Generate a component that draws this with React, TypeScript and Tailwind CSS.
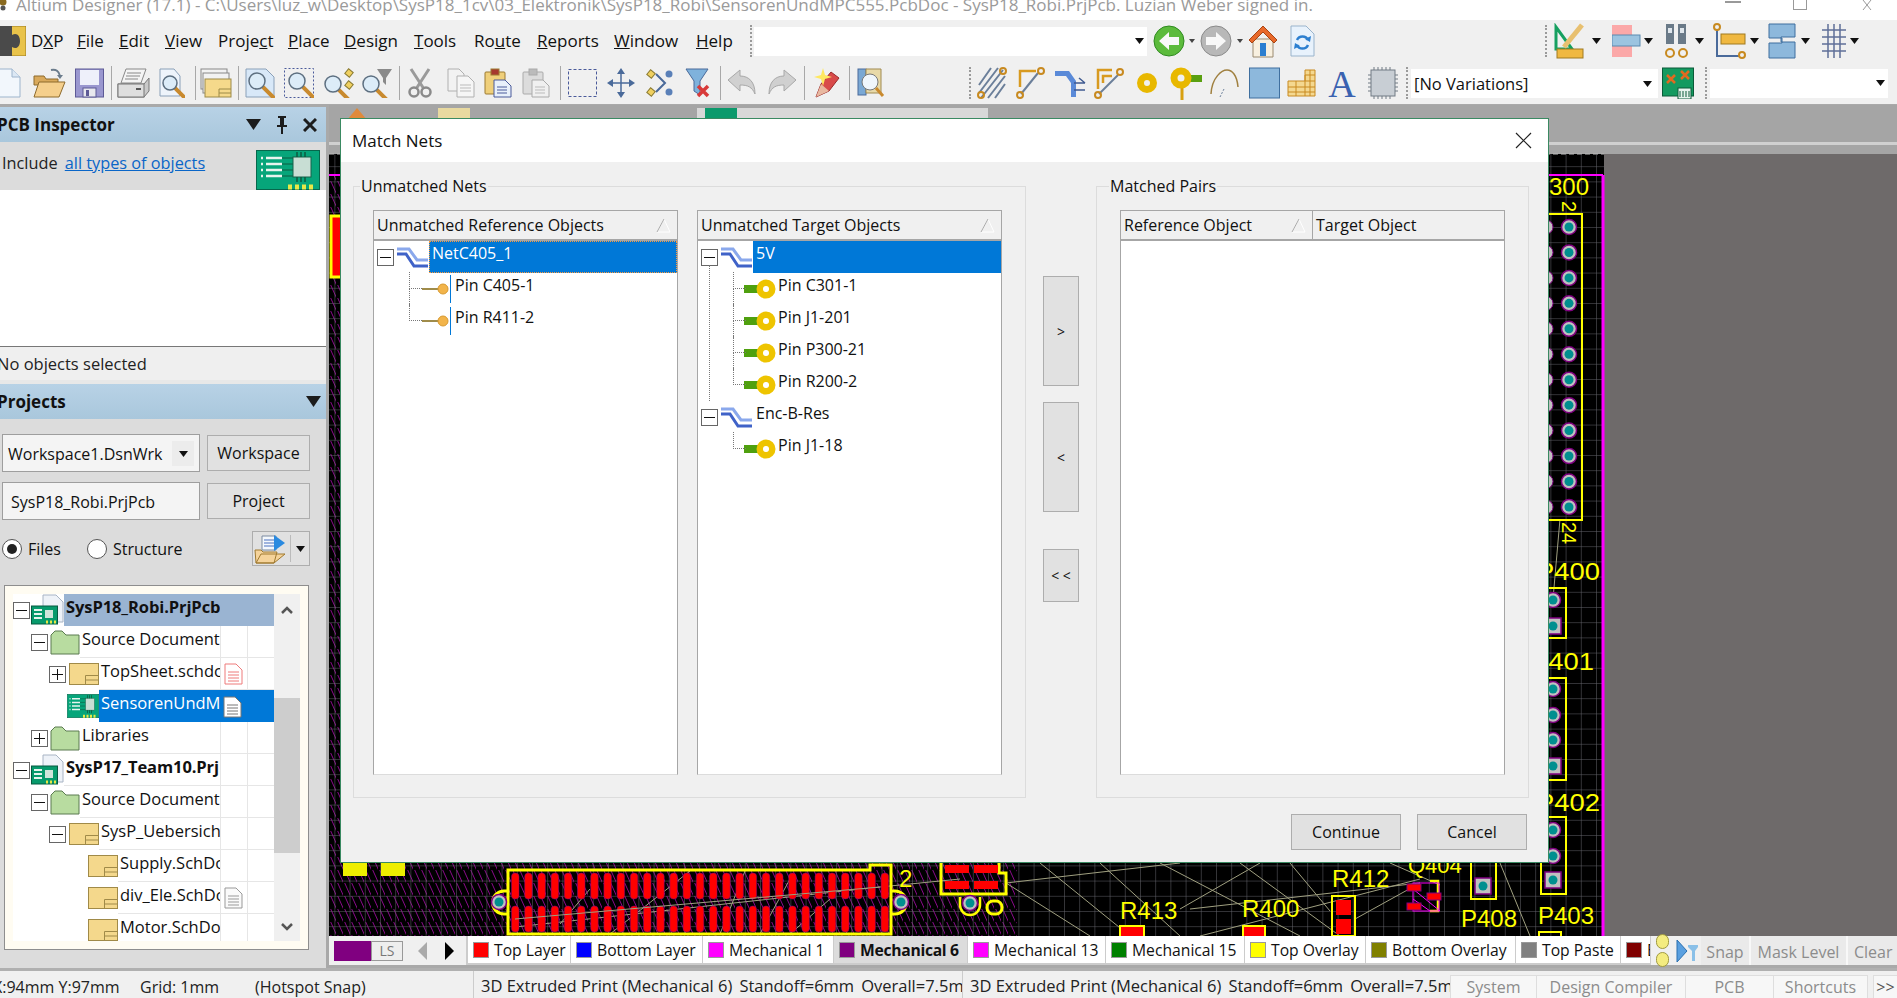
import type { ReactNode } from "react";

type IconProps = { className?: string };

function Ico({ w, h, className, children }: { w: number; h: number; className?: string; children: ReactNode }) {
  return (
    <svg width={w} height={h} viewBox={`0 0 ${w} ${h}`} className={`shrink-0 ${className ?? ""}`}>
      {children}
    </svg>
  );
}

const Sep = ({ className }: IconProps) => <div className={`w-px h-[34px] shrink-0 bg-[#a8a8a8] ${className ?? ""}`} />;
const Grip = ({ className }: IconProps) => <div className={`w-[2px] h-[32px] shrink-0 border-l-2 border-dotted border-[#9a9a9a] ${className ?? ""}`} />;
const Caret = ({ className }: IconProps) => (
  <Ico w={9} h={6} className={className}><path d="M0 0h9L4.500 6z" fill="#111" /></Ico>
);
const MiniCaret = ({ className }: IconProps) => (
  <Ico w={6} h={4} className={className}><path d="M0 0h6L3 4z" fill="#444" /></Ico>
);

const Lens = ({ x = 12, y = 13, r = 9 }: { x?: number; y?: number; r?: number }) => (
  <g>
    <line x1={x + r * 0.7} y1={y + r * 0.7} x2={x + r * 2} y2={y + r * 2} stroke="#c98a2e" strokeWidth="4" strokeLinecap="round" />
    <circle cx={x} cy={y} r={r} fill="#dcecf8" stroke="#5d6f80" strokeWidth="1.500" />
  </g>
);

function NewDoc({ className }: IconProps) {
  return <Ico w={22} h={30} className={className}><path d="M-4 1h16l8 8v20H-4z" fill="#f2f7fc" stroke="#9db4cc" /><path d="M12 1v8h8" fill="#dce8f4" stroke="#9db4cc" /></Ico>;
}
function OpenFolder({ className }: IconProps) {
  return (
    <Ico w={33} h={30} className={className}>
      <path d="M1 8h10l2 3h12v6H1z" fill="#d9a95b" stroke="#8d6a2c" />
      <path d="M1 29 6 14h26l-6 15z" fill="#f5cf8c" stroke="#8d6a2c" />
      <path d="M18 2c5-1 8 1 9 6" fill="none" stroke="#6b7c8c" strokeWidth="2" />
      <path d="m24 7 6 0-3 4z" fill="#6b7c8c" />
    </Ico>
  );
}
function Save({ className }: IconProps) {
  return (
    <Ico w={29} h={30} className={className}>
      <rect x="0.500" y="1" width="28" height="28" fill="#9a97cf" stroke="#5d5a96" />
      <rect x="5" y="2" width="19" height="15" fill="#eef0fa" />
      <rect x="8" y="20" width="13" height="9" fill="#e8e8ee" stroke="#5d5a96" />
      <rect x="11" y="22" width="3" height="6" fill="#5d5a96" />
    </Ico>
  );
}
function Printer({ className }: IconProps) {
  return (
    <Ico w={33} h={30} className={className}>
      <path d="M9 1h20l-5 14H4z" fill="#f4f4f4" stroke="#888" />
      <path d="M10 5h14M9 8h14M8 11h13" stroke="#888" />
      <path d="M1 16h26l5-6v13l-5 6H1z" fill="#c9c9c9" stroke="#777" />
      <rect x="1" y="16" width="26" height="13" fill="#dedede" stroke="#777" />
      <rect x="19" y="20" width="5" height="2" fill="#555" />
    </Ico>
  );
}
function Preview({ className }: IconProps) {
  return <Ico w={26} h={30} className={className}><path d="M1 1h14l6 7v20H1z" fill="#eef4fb" stroke="#8aa0b8" /><Lens x={11} y={15} r={7} /></Ico>;
}
function Sheets({ className }: IconProps) {
  return (
    <Ico w={32} h={30} className={className}>
      <rect x="1" y="1" width="26" height="20" fill="#f2f2f2" stroke="#888" />
      <rect x="3" y="5" width="26" height="20" fill="#f2f2f2" stroke="#888" />
      <rect x="5" y="11" width="26" height="18" fill="#f5d98b" stroke="#9c8a48" />
      <path d="M19 21h12M19 25h12M19 21v8" stroke="#9c8a48" fill="none" />
    </Ico>
  );
}
function ZoomDoc({ className }: IconProps) {
  return <Ico w={30} h={30} className={className}><path d="M1 1h20l8 8v20H1z" fill="#d8e8f8" stroke="#8aa0b8" /><Lens x={12} y={13} r={8} /></Ico>;
}
function ZoomRect({ className }: IconProps) {
  return <Ico w={30} h={30} className={className}><rect x="0.500" y="0.500" width="29" height="29" fill="none" stroke="#4a5a9a" strokeDasharray="2 2" /><Lens x={13} y={13} r={8} /></Ico>;
}
function ZoomSel({ className }: IconProps) {
  return (
    <Ico w={32} h={30} className={className}>
      <Lens x={10} y={16} r={8} />
      <rect x="23" y="2" width="6" height="6" transform="rotate(40 26 5)" fill="#f0d060" stroke="#8a7a30" />
      <rect x="23" y="14" width="6" height="6" transform="rotate(40 26 17)" fill="#f0d060" stroke="#8a7a30" />
    </Ico>
  );
}
function ZoomFilter({ className }: IconProps) {
  return <Ico w={30} h={30} className={className}><Lens x={9} y={16} r={8} /><path d="M15 1h15l-6 9v7l-3-3v-4z" fill="#8a8a8a" /></Ico>;
}
function Scissors({ className }: IconProps) {
  return (
    <Ico w={24} h={30} className={className}>
      <path d="M3 1 16 21M21 1 8 21" stroke="#9a9a9a" strokeWidth="3" />
      <circle cx="6" cy="24" r="4.500" fill="none" stroke="#8a8a8a" strokeWidth="2.500" />
      <circle cx="18" cy="24" r="4.500" fill="none" stroke="#8a8a8a" strokeWidth="2.500" />
    </Ico>
  );
}
function CopyDoc({ className }: IconProps) {
  return (
    <Ico w={28} h={30} className={className}>
      <path d="M1 1h11l5 5v17H1z" fill="#f2f2f2" stroke="#b0b0b0" />
      <path d="M10 8h11l6 6v15H10z" fill="#f6f6f6" stroke="#b0b0b0" />
      <path d="M13 17h11M13 20h11M13 23h11" stroke="#bbb" />
    </Ico>
  );
}
function Paste({ className, dim }: IconProps & { dim?: boolean }) {
  const body = dim ? "#dcdcdc" : "#efcf7a";
  const edge = dim ? "#aaa" : "#9c7a30";
  return (
    <Ico w={28} h={30} className={className}>
      <rect x="1" y="4" width="20" height="22" rx="1" fill={body} stroke={edge} />
      <rect x="7" y="1" width="8" height="6" fill={dim ? "#bbb" : "#a6382e"} stroke={edge} />
      <path d="M10 12h11l6 6v11H10z" fill={dim ? "#f0f0f0" : "#e8f0fa"} stroke={dim ? "#aaa" : "#4a5a9a"} />
      <path d="M13 19h10M13 22h10M13 25h10" stroke={dim ? "#bbb" : "#4a5a9a"} />
    </Ico>
  );
}
function DashRect({ className }: IconProps) {
  return <Ico w={29} h={30} className={className}><rect x="0.500" y="1.500" width="28" height="27" fill="none" stroke="#4a5a9a" strokeDasharray="3 2" /></Ico>;
}
function Move({ className }: IconProps) {
  return (
    <Ico w={28} h={30} className={className}>
      <path d="M14 3v24M2 15h24" stroke="#4a6a9a" strokeWidth="1.500" />
      <path d="M14 0l-4 6h8zM14 30l-4-6h8zM0 15l6-4v8zM28 15l-6-4v8z" fill="#4a6a9a" />
    </Ico>
  );
}
function CrossSel({ className }: IconProps) {
  return (
    <Ico w={30} h={30} className={className}>
      <path d="M11 6 20 15 11 24" fill="none" stroke="#4a6a9a" strokeWidth="2" />
      <circle cx="24" cy="6" r="3.500" fill="#5a80b8" /><circle cx="24" cy="24" r="3.500" fill="#5a80b8" />
      <rect x="3" y="3" width="6" height="6" transform="rotate(40 6 6)" fill="#f0d060" stroke="#8a7a30" />
      <rect x="3" y="21" width="6" height="6" transform="rotate(40 6 24)" fill="#f0d060" stroke="#8a7a30" />
    </Ico>
  );
}
function FunnelX({ className }: IconProps) {
  return (
    <Ico w={26} h={30} className={className}>
      <path d="M1 1h22l-8 12v14l-6-4V13z" fill="#7fb2dc" stroke="#4a6a9a" />
      <path d="m13 18 10 10m0-10L13 28" stroke="#d83a3a" strokeWidth="3.500" />
    </Ico>
  );
}
function Undo({ className, flip }: IconProps & { flip?: boolean }) {
  return (
    <Ico w={30} h={30} className={className}>
      <g transform={flip ? "translate(30 0) scale(-1 1)" : undefined}>
        <path d="M1 12 13 2v6c9 0 15 6 15 18-3-7-7-9-15-9v6z" fill="#d0d0d0" stroke="#a8a8a8" />
      </g>
    </Ico>
  );
}
function Pencil({ className }: IconProps) {
  return (
    <Ico w={29} h={32} className={className}>
      <path d="M3 30 8 17 18 5l8 6-10 13z" fill="#d84a4a" stroke="#9a2a2a" />
      <path d="M3 30 8 17l8 7z" fill="#e8b8a0" />
      <path d="M10 1 12 8 19 10 12 12 10 19 8 12 1 10 8 8z" fill="#ffe860" />
    </Ico>
  );
}
function Inspect({ className }: IconProps) {
  return (
    <Ico w={28} h={32} className={className}>
      <rect x="1" y="2" width="8" height="26" fill="#7aa8d4" stroke="#4a6a9a" />
      <path d="M9 2h15v24H9z" fill="#e8d9a8" stroke="#a08a50" />
      <circle cx="13" cy="15" r="8" fill="#f0f6fc" stroke="#777" />
      <path d="m19 21 7 8" stroke="#c98a2e" strokeWidth="3" />
    </Ico>
  );
}
function Hatch({ className }: IconProps) {
  return (
    <Ico w={31} h={32} className={className}>
      <path d="M2 18 14 1M2 26 21 1M4 31 26 3M11 31 28 9M18 31 28 17" stroke="#6b7f9a" strokeWidth="2" />
      <circle cx="26" cy="4" r="3" fill="none" stroke="#c88a20" strokeWidth="2" />
      <circle cx="4" cy="28" r="3" fill="none" stroke="#c88a20" strokeWidth="2" />
    </Ico>
  );
}
function Track({ className }: IconProps) {
  return (
    <Ico w={30} h={32} className={className}>
      <path d="M5 27 22 6" stroke="#6b7f9a" strokeWidth="2" />
      <path d="M4 20V4h16" fill="none" stroke="#d89a20" strokeWidth="2.500" />
      <circle cx="25" cy="4" r="3" fill="none" stroke="#c88a20" strokeWidth="2" />
      <circle cx="4" cy="28" r="3" fill="none" stroke="#c88a20" strokeWidth="2" />
    </Ico>
  );
}
function Bus({ className }: IconProps) {
  return <Ico w={33} h={32} className={className}><path d="M1 4h14l7 10v16h-5V16l-5-7H1z" fill="#5a8ad8" /><path d="M20 16h11M20 23h11M25 11l6 5" stroke="#3f5a90" strokeWidth="1.500" /></Ico>;
}
function MultiTrack({ className }: IconProps) {
  return (
    <Ico w={31} h={32} className={className}>
      <path d="M4 22V3h14M9 16V9h9" fill="none" stroke="#d89a20" strokeWidth="2.500" />
      <path d="M5 27 24 8" stroke="#6b7f9a" strokeWidth="2" />
      <circle cx="26" cy="5" r="3" fill="none" stroke="#c88a20" strokeWidth="2" />
      <circle cx="4" cy="28" r="3" fill="none" stroke="#c88a20" strokeWidth="2" />
    </Ico>
  );
}
function Via({ className }: IconProps) {
  return <Ico w={20} h={32} className={className}><circle cx="10" cy="16" r="6.500" fill="none" stroke="#e8b800" strokeWidth="7" /></Ico>;
}
function Pad({ className }: IconProps) {
  return (
    <Ico w={32} h={34} className={className}>
      <path d="M12 22v12" stroke="#d8a010" strokeWidth="3" />
      <rect x="18" y="9" width="14" height="7" fill="#5aa010" />
      <circle cx="11" cy="12" r="7" fill="none" stroke="#e8b800" strokeWidth="7" />
    </Ico>
  );
}
function ArcTool({ className }: IconProps) {
  return <Ico w={33} h={32} className={className}><path d="M4 27C5 10 15 3 20 3s10 5 11 17" fill="none" stroke="#a08040" strokeWidth="1.500" /><path d="M17 22l-4 8" stroke="#6b7f9a" strokeDasharray="2 1.500" /></Ico>;
}
function Fill({ className }: IconProps) {
  return <Ico w={31} h={32} className={className}><rect x="0.500" y="1" width="30" height="30" fill="#8db8dc" stroke="#3f6f9f" /></Ico>;
}
function GridFill({ className }: IconProps) {
  return <Ico w={29} h={32} className={className}><path d="M18 3h10v26H1V14h17z" fill="#f4d890" stroke="#c88a20" /><path d="M1 20h27M1 25h27M9 14v15M18 8v21M23 3v26M18 8h10M18 14h10" stroke="#c88a20" /></Ico>;
}
function BigA({ className }: IconProps) {
  return <Ico w={28} h={32} className={className}><text x="14" y="30" textAnchor="middle" fontFamily="'Liberation Serif', serif" fontSize="38" fill="#3a62b0">A</text></Ico>;
}
function ChipTool({ className }: IconProps) {
  return (
    <Ico w={30} h={32} className={className}>
      <rect x="3" y="3" width="24" height="26" fill="#c8ced4" stroke="#707a84" />
      <path d="M6 0v3M10 0v3M14 0v3M18 0v3M22 0v3M6 29v3M10 29v3M14 29v3M18 29v3M22 29v3M0 8h3M0 12h3M0 16h3M0 20h3M0 24h3M27 8h3M27 12h3M27 16h3M27 20h3M27 24h3" stroke="#707a84" />
    </Ico>
  );
}
function BoardIcon({ className, w = 32, h = 32 }: IconProps & { w?: number; h?: number }) {
  return (
    <svg width={w} height={h} viewBox="0 0 64 40" preserveAspectRatio="none" className={`shrink-0 ${className ?? ""}`}>
      <rect x="0.500" y="0.500" width="63" height="39" fill="#06a57a" stroke="#06674c" />
      <path d="M10 8h16M10 14h16M10 20h16M10 26h16" stroke="#e8f4ee" strokeWidth="2.500" />
      <path d="M5 8h2M5 14h2M5 20h2M5 26h2" stroke="#e8f4ee" strokeWidth="2.500" />
      <path d="M26 8h11M26 14h11M26 20h11M26 26h11" stroke="#0c5a40" strokeWidth="1" />
      <rect x="37" y="7" width="18" height="20" fill="#c8ded4" stroke="#16634a" />
      <path d="M41 2v5M45 2v5M49 2v5M41 27v5M45 27v5M49 27v5" stroke="#0c5a40" strokeWidth="1.500" />
      <path d="M32 37h4M39 37h4M46 37h4M53 37h4" stroke="#e8e848" strokeWidth="5" />
    </svg>
  );
}
function VariantBoard({ className }: IconProps) {
  return (
    <Ico w={32} h={32} className={className}>
      <rect x="0.500" y="1" width="31" height="28" fill="#149a60" stroke="#0a5a38" />
      <path d="m5 8 8 8m0-8-8 8M19 4l8 8m0-8-8 8" stroke="#e06a20" strokeWidth="2.500" />
      <rect x="16" y="21" width="13" height="11" fill="#e8f4ee" stroke="#0a5a38" />
      <path d="M18 24v6M21 24v6M24 24v6M27 24v6" stroke="#0a5a38" />
    </Ico>
  );
}
function NavCircle({ className, green }: IconProps & { green?: boolean }) {
  const fill = green ? "#5cbb3c" : "#b8b8b8";
  const edge = green ? "#2f8a20" : "#8a8a8a";
  return (
    <Ico w={32} h={34} className={className}>
      <circle cx="16" cy="17" r="15" fill={fill} stroke={edge} />
      <path d={green ? "M6 17 16 8v5h10v8H16v5z" : "M26 17 16 8v5H6v8h10v5z"} fill="#f8f8f8" />
    </Ico>
  );
}
function Home({ className }: IconProps) {
  return (
    <Ico w={30} h={34} className={className}>
      <path d="M5 15h20v18H5z" fill="#f8f0e0" stroke="#9a8a70" />
      <path d="M1 16 15 2l14 14-3 3L15 8 4 19z" fill="#e8692a" stroke="#a84414" />
      <rect x="12" y="19" width="6" height="13" fill="#2c7fd0" />
    </Ico>
  );
}
function SyncDoc({ className }: IconProps) {
  return (
    <Ico w={25} h={32} className={className}>
      <path d="M1 1h15l8 8v22H1z" fill="#e8f2fc" stroke="#9ab4cc" />
      <path d="M7 15a6 6 0 0 1 11 0M18 20a6 6 0 0 1-11 0" fill="none" stroke="#2c7fd0" strokeWidth="2.500" />
      <path d="m15 14 5 3 1-6zM10 21l-5-3-1 6z" fill="#2c7fd0" />
    </Ico>
  );
}
function RuleTool({ className }: IconProps) {
  return (
    <Ico w={34} h={36} className={className}>
      <path d="M4 26V4l16 22z" fill="none" stroke="#16a060" strokeWidth="3" />
      <rect x="5" y="26" width="26" height="9" fill="#f0b840" stroke="#a07a20" />
      <path d="M30 2 12 24" stroke="#e8c070" strokeWidth="5" />
    </Ico>
  );
}
function Layers2({ className }: IconProps) {
  return (
    <Ico w={30} h={34} className={className}>
      <rect x="0" y="1" width="20" height="32" fill="#fba8a8" />
      <rect x="0" y="11" width="28" height="11" fill="#9cc4e0" stroke="#5a8ab0" />
    </Ico>
  );
}
function Binoculars({ className }: IconProps) {
  return (
    <Ico w={26} h={36} className={className}>
      <rect x="3" y="1" width="8" height="20" fill="#6a7a88" /><rect x="15" y="1" width="8" height="20" fill="#6a7a88" />
      <rect x="5" y="5" width="4" height="5" fill="#dfe6ec" /><rect x="17" y="5" width="4" height="5" fill="#dfe6ec" />
      <circle cx="7" cy="30" r="4" fill="none" stroke="#c88a20" strokeWidth="2" /><circle cx="20" cy="30" r="4" fill="none" stroke="#c88a20" strokeWidth="2" />
    </Ico>
  );
}
function Ruler({ className }: IconProps) {
  return (
    <Ico w={35} h={36} className={className}>
      <path d="M4 7v26h22" fill="none" stroke="#4a6a9a" strokeWidth="2" />
      <circle cx="4" cy="4" r="3" fill="none" stroke="#c88a20" strokeWidth="2" /><circle cx="29" cy="32" r="3" fill="none" stroke="#c88a20" strokeWidth="2" />
      <rect x="8" y="11" width="24" height="10" fill="#f0b840" stroke="#a07a20" />
    </Ico>
  );
}
function Room({ className }: IconProps) {
  return <Ico w={28} h={36} className={className}><path d="M1 1h26v13H13v5h14v16H1V20h13v-5H1z" fill="#8db8dc" stroke="#3f6f9f" /></Ico>;
}
function GridTool({ className }: IconProps) {
  return <Ico w={26} h={36} className={className}><path d="M7 1v34M13 1v34M19 1v34M1 7h24M1 14h24M1 21h24M1 28h24" stroke="#5f6f98" strokeWidth="1.500" /></Ico>;
}

function Menu({ children, className }: { children: ReactNode; className?: string }) {
  return <span className={`text-[17px] text-[#111] ${className ?? ""}`}>{children}</span>;
}

function MenuBar() {
  return (
    <div className="h-[42px] bg-[#f0f0f0] flex items-center">
      <Ico w={26} h={30}>
        <rect x="0" y="0" width="26" height="30" fill="#e9c34a" stroke="#9a7a20" />
        <path d="M0 0h12v9c5-3 8 1 8 6s-3 9-8 6v9H0z" fill="#4a4a4a" />
      </Ico>
      <Menu className="ml-[5px] w-[46px]">D<u>X</u>P</Menu>
      <Menu className="w-[42px]"><u>F</u>ile</Menu>
      <Menu className="w-[46px]"><u>E</u>dit</Menu>
      <Menu className="w-[53px]"><u>V</u>iew</Menu>
      <Menu className="w-[70px]">Proje<u>c</u>t</Menu>
      <Menu className="w-[56px]"><u>P</u>lace</Menu>
      <Menu className="w-[70px]"><u>D</u>esign</Menu>
      <Menu className="w-[60px]"><u>T</u>ools</Menu>
      <Menu className="w-[63px]">Ro<u>u</u>te</Menu>
      <Menu className="w-[77px]"><u>R</u>eports</Menu>
      <Menu className="w-[82px]"><u>W</u>indow</Menu>
      <Menu className="w-[50px]"><u>H</u>elp</Menu>
      <Grip className="ml-[4px]" />
      <div className="ml-[2px] w-[393px] h-[29px] bg-white flex items-center justify-end pr-[3px]">
        <Caret />
      </div>
      <NavCircle green className="ml-[6px]" />
      <MiniCaret className="ml-[4px]" />
      <NavCircle className="ml-[5px]" />
      <MiniCaret className="ml-[5px]" />
      <Home className="ml-[5px]" />
      <SyncDoc className="ml-[12px]" />
      <Grip className="ml-[230px]" />
      <RuleTool className="ml-[5px]" />
      <Caret className="ml-[6px]" />
      <Layers2 className="ml-[11px]" />
      <Caret className="ml-[2px]" />
      <Binoculars className="ml-[10px]" />
      <Caret className="ml-[6px]" />
      <Ruler className="ml-[9px]" />
      <Caret className="ml-[2px]" />
      <Room className="ml-[9px]" />
      <Caret className="ml-[5px]" />
      <GridTool className="ml-[11px]" />
      <Caret className="ml-[3px]" />
    </div>
  );
}

function ToolBar() {
  return (
    <div className="h-[42px] bg-[#f0f0f0] flex items-center">
      <NewDoc />
      <OpenFolder className="ml-[11px]" />
      <Save className="ml-[9px]" />
      <Sep className="ml-[7px]" />
      <Printer className="ml-[5px]" />
      <Preview className="ml-[9px]" />
      <Sep className="ml-[10px]" />
      <Sheets className="ml-[4px]" />
      <Sep className="ml-[6px]" />
      <ZoomDoc className="ml-[6px]" />
      <ZoomRect className="ml-[9px]" />
      <ZoomSel className="ml-[9px]" />
      <ZoomFilter className="ml-[7px]" />
      <Sep className="ml-[7px]" />
      <Scissors className="ml-[8px]" />
      <CopyDoc className="ml-[15px]" />
      <Paste className="ml-[9px]" />
      <Paste dim className="ml-[10px]" />
      <Sep className="ml-[10px]" />
      <DashRect className="ml-[7px]" />
      <Move className="ml-[10px]" />
      <CrossSel className="ml-[10px]" />
      <FunnelX className="ml-[10px]" />
      <Sep className="ml-[9px]" />
      <Undo className="ml-[6px]" />
      <Undo flip className="ml-[10px]" />
      <Sep className="ml-[7px]" />
      <Pencil className="ml-[8px]" />
      <Sep className="ml-[7px]" />
      <Inspect className="ml-[7px]" />
      <Grip className="ml-[84px]" />
      <Hatch className="ml-[6px]" />
      <Track className="ml-[8px]" />
      <Bus className="ml-[8px]" />
      <MultiTrack className="ml-[7px]" />
      <Via className="ml-[12px]" />
      <Pad className="ml-[13px]" />
      <ArcTool className="ml-[5px]" />
      <Fill className="ml-[9px]" />
      <GridFill className="ml-[7px]" />
      <BigA className="ml-[12px]" />
      <ChipTool className="ml-[12px]" />
      <Grip className="ml-[8px]" />
      <div className="ml-[3px] w-[247px] h-[29px] bg-white flex items-center justify-between pl-[3px] pr-[6px] pt-[2px] text-[16.500px] text-[#111]">
        <span>[No Variations]</span>
        <Caret />
      </div>
      <VariantBoard className="ml-[4px]" />
      <Grip className="ml-[11px]" />
      <div className="ml-[3px] w-[178px] h-[29px] bg-white flex items-center justify-end pr-[3px]">
        <Caret />
      </div>
    </div>
  );
}

function PaneHeader({ children, right }: { children: ReactNode; right: ReactNode }) {
  return (
    <div className="h-[35px] shrink-0 bg-gradient-to-b from-[#b8d2e6] to-[#a9c7dc] flex items-center justify-between">
      <span className="-ml-[3px] pt-[1px] text-[17px] font-bold text-[#111]">{children}</span>
      {right}
    </div>
  );
}

const HeadTriangle = ({ className }: IconProps) => (
  <Ico w={15} h={11} className={className}><path d="M0 0h15L7.500 11z" fill="#1c1c1c" /></Ico>
);

function TreeBox({ open, className }: { open: boolean; className?: string }) {
  return (
    <Ico w={17} h={17} className={className}>
      <rect x="0.500" y="0.500" width="16" height="16" fill="#fff" stroke="#666" />
      <path d={open ? "M3 8.500h11" : "M3 8.500h11M8.500 3v11"} stroke="#111" />
    </Ico>
  );
}
const FolderGreen = ({ className }: IconProps) => (
  <Ico w={30} h={25} className={className}>
    <path d="M1 24V5l4-4h7l4 4h13v19z" fill="#b8dca0" stroke="#5a7a50" />
  </Ico>
);
const SheetIcon = ({ className }: IconProps) => (
  <Ico w={30} h={22} className={className}>
    <rect x="0.500" y="0.500" width="29" height="21" fill="#f4d88c" stroke="#a08a48" />
    <path d="M16.500 21.500v-9h13M16.500 17h13" fill="none" stroke="#a08a48" />
  </Ico>
);
const ProjectIcon = ({ className }: IconProps) => (
  <Ico w={33} h={32} className={className}>
    <path d="M12 1h13l7 7v20H12z" fill="#eef2f8" stroke="#a8b4c4" />
    <rect x="0.500" y="12" width="26" height="18" fill="#079a6c" stroke="#055a40" />
    <path d="M3 16h8M3 20h8M3 24h8" stroke="#e8f4ee" strokeWidth="2" />
    <rect x="14" y="16" width="8" height="8" fill="#d0e4da" />
    <path d="M15 28h2M19 28h2M23 28h2" stroke="#e8e848" strokeWidth="3" />
  </Ico>
);
const PageMark = ({ tone }: { tone: "red" | "gray" | "white" }) => {
  const stroke = tone === "red" ? "#ee7a7a" : tone === "gray" ? "#999" : "#777";
  return (
    <Ico w={19} h={22} className="mt-[1px]">
      <path d="M1 1h11l6 6v14H1z" fill={tone === "gray" ? "#fafafa" : "#fff"} stroke={stroke} />
      <path d="M4 9h11M4 12h11M4 15h11M4 18h11" stroke={stroke} />
    </Ico>
  );
};

type ProjRow = {
  label: string;
  pad: string;
  box?: boolean;
  open?: boolean;
  kind: "project" | "green" | "sheet" | "board";
  mark?: "red" | "gray" | "white";
  state?: "head" | "sel";
  bold?: boolean;
};

const projRows: ProjRow[] = [
  { label: "SysP18_Robi.PrjPcb", pad: "pl-0", box: true, open: true, kind: "project", state: "head", bold: true },
  { label: "Source Documents", pad: "pl-[18px]", box: true, open: true, kind: "green" },
  { label: "TopSheet.schdoc", pad: "pl-[36px]", box: true, kind: "sheet", mark: "red" },
  { label: "SensorenUndMPC555", pad: "pl-[54px]", kind: "board", mark: "white", state: "sel" },
  { label: "Libraries", pad: "pl-[18px]", box: true, kind: "green" },
  { label: "SysP17_Team10.PrjPcb", pad: "pl-0", box: true, open: true, kind: "project", bold: true },
  { label: "Source Documents", pad: "pl-[18px]", box: true, open: true, kind: "green" },
  { label: "SysP_Uebersicht.SchDoc", pad: "pl-[36px]", box: true, open: true, kind: "sheet" },
  { label: "Supply.SchDoc", pad: "pl-[73px]", kind: "sheet" },
  { label: "div_Ele.SchDoc", pad: "pl-[73px]", kind: "sheet", mark: "gray" },
  { label: "Motor.SchDoc", pad: "pl-[73px]", kind: "sheet" },
];

function ProjectRow({ row }: { row: ProjRow }) {
  const sel = row.state === "sel";
  const head = row.state === "head";
  const cellTone = sel ? "bg-[#0078d7]" : head ? "bg-[#9ab4d2]" : "border-l border-b border-[#e6e6e6]";
  return (
    <div className="flex h-[32px] w-[261px]">
      <div className={`w-[207px] flex items-center overflow-hidden ${row.pad}`}>
        {row.box && <TreeBox open={!!row.open} className="mr-px" />}
        {row.kind === "project" && <ProjectIcon />}
        {row.kind === "green" && <FolderGreen className="ml-px" />}
        {row.kind === "sheet" && <SheetIcon className="ml-[2px]" />}
        {row.kind === "board" && <BoardIcon w={32} h={24} />}
        <span
          className={`h-full flex-1 pl-[2px] text-[16.500px] leading-[26px] whitespace-nowrap overflow-hidden ${row.bold ? "font-bold tracking-[-0.1px] text-[#111]" : "text-[#111]"} ${sel ? "bg-[#0078d7] text-white" : head ? "bg-[#9ab4d2]" : "border-b border-[#e6e6e6]"}`}
        >
          {row.label}
        </span>
      </div>
      <div className={`w-[27px] pl-[3px] flex items-center ${cellTone}`}>
        {row.mark && <PageMark tone={row.mark} />}
      </div>
      <div className={`w-[27px] ${cellTone}`} />
    </div>
  );
}

function LeftPanel() {
  return (
    <div className="w-[326px] mt-[3px] bg-[#dcdcdc] flex flex-col shrink-0 text-[#111]">
      <PaneHeader
        right={
          <div className="flex items-center mr-[9px] gap-[14px]">
            <HeadTriangle />
            <Ico w={14} h={18}>
              <path d="M3 0h8v2H9v7h3v2H8v7H6v-7H2V9h3V2H3z" fill="#1c1c1c" />
            </Ico>
            <Ico w={14} h={14}>
              <path d="m1 1 12 12m0-12L1 13" stroke="#1c1c1c" strokeWidth="3" />
            </Ico>
          </div>
        }
      >
        PCB Inspector
      </PaneHeader>
      <div className="h-[48px] shrink-0 flex justify-between items-start pr-[6px] pl-[2px]">
        <div className="pt-[9px] text-[16.300px] text-[#222]">
          Include <a className="ml-[3px] text-[#0a66c8] underline">all types of objects</a>
        </div>
        <BoardIcon w={64} h={40} className="mt-[8px]" />
      </div>
      <div className="h-[157px] shrink-0 bg-white border-b border-[#777]" />
      <div className="h-[33px] shrink-0 bg-[#efefef] flex items-center -ml-[3px] pt-[2px] text-[16.500px] text-[#222]">No objects selected</div>
      <div className="h-[4px] shrink-0 bg-[#e8e8e8]" />
      <PaneHeader right={<HeadTriangle className="mr-[5px]" />}>Projects</PaneHeader>

      <div className="flex items-center mt-[15px] pl-[2px]">
        <div className="w-[198px] h-[38px] bg-[#f4f4f4] border border-[#9e9e9e] flex items-center justify-between pl-[5px] pr-[5px] pt-[1px] text-[16px]">
          <span>Workspace1.DsnWrk</span>
          <span className="w-[22px] h-[25px] bg-[#ececec] flex items-center justify-center"><Caret /></span>
        </div>
        <div className="ml-[7px] w-[103px] h-[36px] bg-[#e1e1e1] border border-[#adadad] flex items-center justify-center text-[16px]">Workspace</div>
      </div>
      <div className="flex items-center mt-[10px] pl-[2px]">
        <div className="w-[198px] h-[38px] bg-[#f4f4f4] border border-[#9e9e9e] flex items-center pl-[8px] pt-[1px] text-[16px]">SysP18_Robi.PrjPcb</div>
        <div className="ml-[7px] w-[103px] h-[36px] bg-[#e1e1e1] border border-[#adadad] flex items-center justify-center text-[16px]">Project</div>
      </div>
      <div className="flex items-center mt-[11px] h-[35px] pl-[2px] text-[16px]">
        <span className="w-[20px] h-[20px] rounded-full bg-white border border-[#555] flex items-center justify-center">
          <span className="w-[10px] h-[10px] rounded-full bg-[#222]" />
        </span>
        <span className="ml-[6px] pt-[1px]">Files</span>
        <span className="ml-[26px] w-[20px] h-[20px] rounded-full bg-white border border-[#555]" />
        <span className="ml-[6px] pt-[1px]">Structure</span>
        <div className="ml-auto mr-[16px] w-[58px] h-[35px] bg-[#e1e1e1] border border-[#adadad] flex items-center pl-[1px]">
          <Ico w={32} h={30}>
            <path d="M8 2h14v14H8z" fill="#f4f8fc" stroke="#7a8aa0" />
            <path d="M10 6h10M10 9h10M10 12h10" stroke="#4a70c0" />
            <path d="M20 1l11 8-11 8z" fill="#2a8ae0" />
            <path d="M2 29 1 16h6l2 2h14l-3 11zM2 29l5-9h24l-11 9z" fill="#f5d39a" stroke="#a07a30" />
          </Ico>
          <span className="ml-[4px] h-[27px] border-l border-[#bbb]" />
          <Caret className="ml-[5px]" />
        </div>
      </div>

      <div className="mt-[19px] ml-[4px] w-[305px] h-[365px] bg-[#fffcf2] border border-[#8e8e8e] p-[8px] flex">
        <div className="w-[261px] bg-white overflow-hidden">
          {projRows.map((row, i) => (
            <ProjectRow key={i} row={row} />
          ))}
        </div>
        <div className="w-[26px] bg-[#f0f0f0] flex flex-col items-center">
          <div className="h-[104px] w-full flex justify-center pt-[12px]">
            <Ico w={12} h={8}><path d="m1 7 5-5 5 5" fill="none" stroke="#555" strokeWidth="2.500" /></Ico>
          </div>
          <div className="h-[155px] w-full bg-[#cdcdcd]" />
          <div className="flex-1 w-full flex justify-center items-end pb-[10px]">
            <Ico w={12} h={8}><path d="m1 1 5 5 5-5" fill="none" stroke="#555" strokeWidth="2.500" /></Ico>
          </div>
        </div>
      </div>
    </div>
  );
}

function Silk({ x, y, children, size = 24, anchor = "start", rotate, length }: { x: number; y: number; children: string; size?: number; anchor?: "start" | "end"; rotate?: number; length?: number }) {
  return (
    <text
      x={x}
      y={y}
      fontSize={size}
      textAnchor={anchor}
      fontFamily="'Liberation Sans', sans-serif"
      fill="#ffff00"
      textLength={length}
      lengthAdjust={length ? "spacingAndGlyphs" : undefined}
      transform={rotate ? `rotate(${rotate} ${x} ${y})` : undefined}
    >
      {children}
    </text>
  );
}

const Hole = ({ x, y, square }: { x: number; y: number; square?: boolean }) =>
  square ? (
    <g>
      <rect x={x - 8} y={y - 8} width="16" height="16" fill="#c0c0c0" stroke="#800080" strokeWidth="1.500" />
      <circle cx={x} cy={y} r="4.500" fill="#008f8f" />
    </g>
  ) : (
    <g>
      <circle cx={x} cy={y} r="7.500" fill="#c0c0c0" stroke="#800080" strokeWidth="1.500" />
      <circle cx={x} cy={y} r="4.500" fill="#008f8f" />
    </g>
  );

const rightPads = Array.from({ length: 12 }, (_, i) => 228 + i * 25.45);
const connPads = Array.from({ length: 29 }, (_, i) => 515 + i * 13.2);
const ratsnest = [
  "515 928 880 888", "880 888 960 880", "610 935 690 872", "720 935 745 872", "760 935 790 880", "790 935 830 900",
  "560 925 590 890", "1006 884 1180 864", "1006 884 1090 937", "1040 864 1130 937", "1100 864 1180 937", "1160 864 1300 937",
  "1180 910 1260 864", "1190 910 1420 884", "1200 937 1420 880", "1240 864 1340 937", "1290 864 1330 912", "1355 920 1420 884",
  "1500 864 1530 937", "1560 520 1553 600", "1390 864 1440 886",
];

function PcbCanvas() {
  return (
    <svg width="1568" height="791" viewBox="329 146 1568 791" className="block">
      <defs>
        <pattern id="grid" width="15.2" height="15.2" patternUnits="userSpaceOnUse">
          <path d="M15.200 0H0V15.200" fill="none" stroke="#66666e" strokeWidth="1" />
        </pattern>
        <pattern id="hatch" width="7" height="13" patternUnits="userSpaceOnUse">
          <path d="M-1 -6 8 14" stroke="#8a0a8a" strokeWidth="1" />
        </pattern>
      </defs>
      <rect x="329" y="146" width="1568" height="791" fill="#6e6a6a" />
      <rect x="329" y="146" width="1568" height="9" fill="#a5a5a5" />
      <rect x="329" y="155" width="1275" height="782" fill="#000" />
      <path d="M329 155H1604" stroke="#bbb" strokeDasharray="5 3" />
      <rect x="329" y="176" width="688" height="761" fill="url(#hatch)" />
      <rect x="329" y="155" width="1275" height="782" fill="url(#grid)" />
      <path d="M329 176H1603" stroke="#ff00ff" strokeWidth="2" />
      <path d="M1603 176V937" stroke="#ff00ff" strokeWidth="3" />

      <rect x="331" y="217" width="12" height="61" fill="#f00" stroke="#ffff00" strokeWidth="3" />

      {ratsnest.map((l, i) => {
        const [x1, y1, x2, y2] = l.split(" ");
        return <line key={i} x1={x1} y1={y1} x2={x2} y2={y2} stroke="#a0a080" strokeWidth="1" />;
      })}

      <Silk x={1549} y={196} size={24}>300</Silk>
      <rect x="1530" y="215" width="52" height="306" fill="none" stroke="#ffff00" strokeWidth="2" />
      <Silk x={1562} y={202} size={20} rotate={90}>2</Silk>
      <Silk x={1562} y={523} size={20} rotate={90}>24</Silk>
      {rightPads.map((y) => (
        <g key={y}>
          <Hole x={1569} y={y} />
          <circle cx={1546} cy={y} r="7" fill="#c0c0c0" stroke="#800080" />
        </g>
      ))}
      <Silk x={1536} y={581} length={64}>P400</Silk>
      <rect x="1530" y="589" width="36" height="50" fill="none" stroke="#ffff00" strokeWidth="2" />
      <Hole x={1553} y={601} /><Hole x={1553} y={627} square />
      <Silk x={1530} y={671} length={64}>P401</Silk>
      <rect x="1530" y="679" width="36" height="102" fill="none" stroke="#ffff00" strokeWidth="2" />
      <Hole x={1553} y={690} /><Hole x={1553} y={716} /><Hole x={1553} y={741} /><Hole x={1553} y={767} square />
      <Silk x={1536} y={812} length={64}>P402</Silk>
      <rect x="1541" y="818" width="25" height="77" fill="none" stroke="#ffff00" strokeWidth="2" />
      <Hole x={1553} y={831} /><Hole x={1553} y={857} /><Hole x={1553} y={881} square />

      <rect x="343" y="863" width="24" height="14" fill="#eeee00" />
      <rect x="381" y="863" width="24" height="14" fill="#eeee00" />

      <path d="M508 871H870V866H891V935H508Z" fill="none" stroke="#ffff00" strokeWidth="3" />
      {connPads.map((x) => (
        <g key={x}>
          <rect x={x - 3.500} y={874} width="7.500" height="26" rx="3.500" fill="#f00" stroke="#800080" strokeWidth="0.500" />
          <rect x={x - 3.500} y={907} width="7.500" height="26" rx="3.500" fill="#f00" stroke="#800080" strokeWidth="0.500" />
        </g>
      ))}
      <path d="M515 920 880 888" stroke="#a0a080" />
      <path d="M508 892h-4a11 11 0 0 0 0 23h4M891 892h4a11 11 0 0 1 0 23h-4" fill="none" stroke="#ffff00" strokeWidth="3" />
      <Hole x={499} y={903} /><Hole x={901} y={903} />
      <Silk x={899} y={888} size={24}>2</Silk>

      <path d="M941 863V895H1006V874H999V863" fill="none" stroke="#ffff00" strokeWidth="3" />
      <rect x="945" y="866" width="24" height="8" fill="#f00" /><rect x="974" y="866" width="24" height="8" fill="#f00" />
      <rect x="945" y="882" width="24" height="8" fill="#f00" /><rect x="974" y="882" width="24" height="8" fill="#f00" />
      <path d="M960 898v8a9 9 0 0 0 20 0v-8" fill="none" stroke="#ffff00" strokeWidth="2.500" />
      <Hole x={970} y={904} />
      <rect x="987" y="902" width="15" height="13" rx="6" fill="none" stroke="#ffff00" strokeWidth="3" />

      <Silk x={1120} y={920}>R413</Silk>
      <rect x="1120" y="927" width="24" height="12" fill="#f00" stroke="#ffff00" strokeWidth="2" />
      <Silk x={1242} y={918}>R400</Silk>
      <rect x="1243" y="927" width="22" height="12" fill="#f00" stroke="#ffff00" strokeWidth="2" />
      <Silk x={1332} y={888}>R412</Silk>
      <rect x="1332" y="897" width="23" height="40" fill="none" stroke="#ffff00" strokeWidth="2" />
      <rect x="1336" y="901" width="15" height="15" fill="#f00" />
      <rect x="1336" y="920" width="15" height="15" fill="#f00" />
      <Silk x={1408} y={874} size={22}>Q404</Silk>
      <path d="M1430 882h8v30h-8" fill="none" stroke="#ffff00" strokeWidth="2.500" />
      <rect x="1413" y="884" width="26" height="28" fill="none" stroke="#ff00ff" />
      <path d="M1413 890 1440 912M1413 900 1430 912" stroke="#ff00ff" />
      <rect x="1407" y="885" width="14" height="7" fill="#f00" stroke="#800080" />
      <rect x="1407" y="904" width="14" height="7" fill="#f00" stroke="#800080" />
      <rect x="1427" y="894" width="14" height="7" fill="#f00" stroke="#800080" />
      <rect x="1471" y="862" width="25" height="38" fill="none" stroke="#ffff00" strokeWidth="2" />
      <Hole x={1483} y={887} square />
      <Silk x={1461} y={928}>P408</Silk>
      <Silk x={1538} y={925}>P403</Silk>
      <rect x="1539" y="933" width="22" height="8" fill="none" stroke="#ffff00" strokeWidth="2" />
    </svg>
  );
}

const layers = [
  { name: "Top Layer", swatch: "bg-[#ff0000]", w: "w-[103px]" },
  { name: "Bottom Layer", swatch: "bg-[#0000ff]", w: "w-[132px]" },
  { name: "Mechanical 1", swatch: "bg-[#ff00ff]", w: "w-[131px]" },
  { name: "Mechanical 6", swatch: "bg-[#800080]", w: "w-[134px]", active: true },
  { name: "Mechanical 13", swatch: "bg-[#ff00ff]", w: "w-[138px]" },
  { name: "Mechanical 15", swatch: "bg-[#008000]", w: "w-[139px]" },
  { name: "Top Overlay", swatch: "bg-[#ffff00]", w: "w-[121px]" },
  { name: "Bottom Overlay", swatch: "bg-[#808000]", w: "w-[150px]" },
  { name: "Top Paste", swatch: "bg-[#808080]", w: "w-[105px]" },
  { name: "Bottom Paste", swatch: "bg-[#800000]", w: "w-[30px]" },
];

function LayerBar() {
  return (
    <div className="h-[29px] bg-[#f0f0f0] flex items-center text-[#111]">
      <span className="ml-[5px] w-[37px] h-[20px] bg-[#800080]" />
      <span className="w-[32px] h-[20px] bg-[#eee] border border-[#999] flex items-center justify-center text-[14px] text-[#777]">LS</span>
      <Ico w={9} h={18} className="ml-[15px]"><path d="M9 0v18L0 9z" fill="#aaa" /></Ico>
      <Ico w={9} h={18} className="ml-[18px]"><path d="M0 0v18l9-9z" fill="#000" /></Ico>
      <span className="ml-[12px] w-[2px] h-[29px] bg-[#ccc]" />
      {layers.map((l) => (
        <div
          key={l.name}
          className={`${l.w} h-[29px] shrink-0 overflow-hidden flex items-center pl-[5px] border-r border-b-2 border-[#ccc] whitespace-nowrap text-[15.700px] ${l.active ? "bg-[#dcdcdc] font-bold tracking-[-0.3px]" : "bg-white"}`}
        >
          <span className={`w-[16px] h-[16px] shrink-0 border border-[#999] ${l.swatch}`} />
          <span className="ml-[5px] pt-[3px]">{l.name}</span>
        </div>
      ))}
      <div className="w-[50px] flex items-center shrink-0">
        <div className="flex flex-col gap-[3px] ml-[5px]">
          <span className="w-[13px] h-[15px] rounded-full bg-[#f4ec80] border border-[#a09a40]" />
          <span className="w-[13px] h-[15px] rounded-full bg-[#f4ec80] border border-[#a09a40]" />
        </div>
        <Ico w={12} h={24} className="ml-[7px]"><path d="M1 1l10 11L1 23z" fill="#5aa0e0" stroke="#2a70b0" /></Ico>
        <Ico w={10} h={24}><path d="M0 6h10v2L7 12v10H4V12L0 8z" fill="#8ac0e8" /></Ico>
      </div>
      <div className="w-[50px] h-[29px] flex items-center justify-center pt-[3px] bg-[#eaeaea] border-r-2 border-[#f8f8f8] text-[16px] text-[#8c8c8c]">Snap</div>
      <div className="w-[97px] h-[29px] flex items-center justify-center pt-[3px] bg-[#eaeaea] border-r-2 border-[#f8f8f8] text-[16px] text-[#8c8c8c]">Mask Level</div>
      <div className="flex-1 h-[29px] flex items-center pl-[6px] pt-[3px] bg-[#eaeaea] text-[16px] text-[#8c8c8c] whitespace-nowrap overflow-hidden">Clear</div>
    </div>
  );
}

function StatusBar() {
  return (
    <div className="h-[27px] bg-[#f0f0f0] flex items-center text-[16px] text-[#222] whitespace-nowrap">
      <span className="-ml-[7px] pt-[4px] w-[147px]">X:94mm Y:97mm</span>
      <span className="w-[115px] pt-[4px]">Grid: 1mm</span>
      <span className="w-[218px] pt-[4px]">(Hotspot Snap)</span>
      <div className="w-[489px] h-full border-l border-[#ccc] pl-[7px] pt-[4px] overflow-hidden flex items-center gap-[7px] text-[16.500px]">
        <span>3D Extruded Print (Mechanical 6)</span><span>Standoff=6mm</span><span>Overall=7.5mm</span>
      </div>
      <div className="w-[488px] h-full border-l border-[#ccc] pl-[7px] pt-[4px] overflow-hidden flex items-center gap-[7px] text-[16.500px]">
        <span>3D Extruded Print (Mechanical 6)</span><span>Standoff=6mm</span><span>Overall=7.5mm</span>
      </div>
      <div className="h-full pt-[4px] flex text-[#8c8c8c] text-[16px]">
        <span className="w-[87px] bg-[#f7f7f7] border border-b-0 border-[#dedede] flex items-center justify-center">System</span>
        <span className="w-[149px] bg-[#f7f7f7] border-t border-r border-[#dedede] flex items-center justify-center">Design Compiler</span>
        <span className="w-[88px] bg-[#f7f7f7] border-t border-r border-[#dedede] flex items-center justify-center">PCB</span>
        <span className="w-[94px] bg-[#f7f7f7] border-t border-r border-[#dedede] flex items-center justify-center">Shortcuts</span>
        <span className="ml-[5px] w-[24px] bg-[#f7f7f7] border-t border-l border-[#dedede] flex items-center justify-center text-[#555]">&gt;&gt;</span>
      </div>
    </div>
  );
}

const NetIcon = ({ className }: IconProps) => (
  <Ico w={31} h={22} className={className}>
    <path d="M0 8h9l8 12h14" fill="none" stroke="#3f62c8" strokeWidth="3" />
    <path d="M0 3h12l8 11h11" fill="none" stroke="#8aa8ec" strokeWidth="3" />
  </Ico>
);
const PinThin = ({ className }: IconProps) => (
  <Ico w={27} h={14} className={className}>
    <path d="M0 7h17" stroke="#a08c4a" strokeWidth="2" />
    <circle cx="21" cy="7" r="5" fill="#f2b44a" stroke="#d89a30" />
  </Ico>
);
const PinFat = ({ className }: IconProps) => (
  <Ico w={32} h={22} className={className}>
    <rect x="0" y="7" width="14" height="8" fill="#4fa00e" />
    <circle cx="22" cy="11" r="6" fill="#fff" stroke="#eec400" strokeWidth="7" />
    <circle cx="22" cy="11" r="3" fill="#fff" />
  </Ico>
);

function TreeNet({ label, selected, focus, lineBelow }: { label: string; selected?: boolean; focus?: boolean; lineBelow?: boolean }) {
  return (
    <div className="relative h-[32px] flex items-center pl-[3px]">
      <TreeBox open />
      <NetIcon className="ml-[3px]" />
      <span
        className={`h-full flex-1 ml-px pl-[3px] text-[16px] leading-[24px] ${selected ? "bg-[#0078d7] text-white" : "text-[#111]"} ${focus ? "outline-1 -outline-offset-1 outline-dotted outline-[#ff9a3a]" : ""}`}
      >
        {label}
      </span>
      {lineBelow && <span className="absolute left-[11px] top-[24px] h-[136px] border-l border-dotted border-[#777]" />}
    </div>
  );
}

function TreePin({ label, fat, last }: { label: string; fat?: boolean; last?: boolean }) {
  return (
    <div className="relative h-[32px] flex items-center text-[16px] text-[#111]">
      <span className="absolute left-[35px] -top-[1px] w-[13px] h-[17px] border-l border-b border-dotted border-[#777]" />
      {!last && <span className="absolute left-[35px] top-[16px] h-[17px] border-l border-dotted border-[#777]" />}
      {fat ? <PinFat className="ml-[46px] -mt-[1px]" /> : <PinThin className="ml-[48px]" />}
      <span className={`${fat ? "pl-[2px]" : "ml-px pl-[4px] border-l border-[#0078d7]"} h-[28px] leading-[21px]`}>{label}</span>
    </div>
  );
}

function ListHead({ children, w }: { children: ReactNode; w?: string }) {
  return (
    <div className={`h-[28px] bg-[#f0f0f0] flex items-center justify-between pl-[3px] pr-[6px] text-[16px] text-[#111] ${w ?? "flex-1"}`}>
      <span>{children}</span>
      <Ico w={15} h={15}>
        <path d="M1 14 8 1l6 13z" fill="none" stroke="#fff" />
        <path d="M1 14 8 1" fill="none" stroke="#aaa" />
      </Ico>
    </div>
  );
}

function ActionBtn({ children, h }: { children: string; h: string }) {
  return <div className={`w-[36px] ${h} bg-[#e1e1e1] border border-[#adadad] flex items-center justify-center text-[14px] text-[#111]`}>{children}</div>;
}

function MatchDialog() {
  return (
    <div className="absolute left-[340px] top-[118px] w-[1209px] h-[745px] bg-[#f0f0f0] border border-[#3a8a62] flex flex-col">
      <div className="h-[43px] shrink-0 bg-white flex items-center justify-between pl-[11px] pr-[16px] text-[17px] text-[#111]">
        <span>Match Nets</span>
        <Ico w={17} h={17}><path d="m1 1 15 15m0-15L1 16" stroke="#222" strokeWidth="1.200" /></Ico>
      </div>
      <div className="flex pl-[12px] pt-[12px] h-[636px] shrink-0">
        <fieldset className="w-[673px] h-[624px] border border-[#dcdcdc]">
          <legend className="ml-[6px] px-px text-[16px] leading-[24px] text-[#111]">Unmatched Nets</legend>
          <div className="ml-[19px] mt-[12px] flex gap-[19px]">
            <div className="w-[305px] h-[565px] bg-white border border-[#a6a6a6] border-b-[#dcdcdc]">
              <div className="flex border-b-2 border-[#a6a6a6]"><ListHead>Unmatched Reference Objects</ListHead></div>
              <TreeNet label="NetC405_1" selected focus />
              <TreePin label="Pin C405-1" />
              <TreePin label="Pin R411-2" last />
            </div>
            <div className="w-[305px] h-[565px] bg-white border border-[#a6a6a6] border-b-[#dcdcdc]">
              <div className="flex border-b-2 border-[#a6a6a6]"><ListHead>Unmatched Target Objects</ListHead></div>
              <TreeNet label="5V" selected lineBelow />
              <TreePin label="Pin C301-1" fat />
              <TreePin label="Pin J1-201" fat />
              <TreePin label="Pin P300-21" fat />
              <TreePin label="Pin R200-2" fat last />
              <TreeNet label="Enc-B-Res" />
              <TreePin label="Pin J1-18" fat last />
            </div>
          </div>
        </fieldset>
        <div className="ml-[17px] w-[36px] mt-[102px] flex flex-col">
          <ActionBtn h="h-[110px]">&gt;</ActionBtn>
          <div className="h-[16px]" />
          <ActionBtn h="h-[110px]">&lt;</ActionBtn>
          <div className="h-[37px]" />
          <ActionBtn h="h-[53px]">&lt; &lt;</ActionBtn>
        </div>
        <fieldset className="ml-[17px] w-[433px] h-[624px] border border-[#dcdcdc]">
          <legend className="ml-[12px] px-px text-[16px] leading-[24px] text-[#111]">Matched Pairs</legend>
          <div className="ml-[23px] mt-[12px] w-[385px] h-[565px] bg-white border border-[#a6a6a6] border-b-[#dcdcdc]">
            <div className="flex border-b-2 border-[#a6a6a6]">
              <ListHead w="w-[191px]">Reference Object</ListHead>
              <div className="flex-1 h-[28px] bg-[#f0f0f0] border-l border-[#a6a6a6] flex items-center pl-[3px] text-[16px] text-[#111]">Target Object</div>
            </div>
          </div>
        </fieldset>
      </div>
      <div className="flex justify-end gap-[16px] pr-[21px] pt-[16px] text-[16px] text-[#111]">
        <div className="w-[110px] h-[36px] bg-[#e1e1e1] border border-[#adadad] flex items-center justify-center">Continue</div>
        <div className="w-[110px] h-[36px] bg-[#e1e1e1] border border-[#adadad] flex items-center justify-center">Cancel</div>
      </div>
    </div>
  );
}

function DocTabs() {
  return (
    <div className="h-[40px] mt-px bg-[#a5a5a5] border-b-[3px] border-[#d0d0d0] flex items-start pt-[3px]">
      <Ico w={20} h={12} className="ml-[18px]"><path d="M10 0 20 12H0z" fill="#e08a3a" /></Ico>
      <span className="ml-[71px] w-[32px] h-[10px] bg-[#e8d9a0]" />
      <div className="ml-[227px] w-[291px] h-[14px] bg-[#d8d8d8] flex">
        <span className="ml-[8px] w-[32px] h-[14px] bg-[#0c9a6c]" />
      </div>
    </div>
  );
}

export default function App() {
  return (
    <div className="relative w-[1897px] h-[998px] overflow-hidden bg-[#a9a9a9] flex flex-col font-['Open_Sans',sans-serif]">
      <div className="h-[20px] bg-white overflow-hidden flex justify-between shrink-0">
        <div className="flex -mt-[8px]">
          <Ico w={8} h={16} className="mt-[8px]"><circle cx="3" cy="2" r="3.500" fill="#8a6a20" /><circle cx="3" cy="8" r="2.500" fill="#555" /></Ico>
          <span className="w-[8px]" />
          <span className="text-[17px] text-[#9a9a9a] whitespace-nowrap">
            Altium Designer (17.1) - C:\Users\luz_w\Desktop\SysP18_1cv\03_Elektronik\SysP18_Robi\SensorenUndMPC555.PcbDoc - SysP18_Robi.PrjPcb. Luzian Weber signed in.
          </span>
        </div>
        <div className="flex items-start gap-[52px] pr-[22px]">
          <span className="w-[16px] h-[2px] mt-[1px] bg-[#999]" />
          <span className="w-[14px] h-[10px] border border-t-0 border-[#999]" />
          <Ico w={16} h={12}><path d="m4 0 8 10m0-10L4 10" stroke="#999" /></Ico>
        </div>
      </div>
      <MenuBar />
      <ToolBar />
      <div className="flex h-[864px] shrink-0">
        <LeftPanel />
        <div className="w-[3px] shrink-0" />
        <div className="flex-1 min-w-0 flex flex-col">
          <DocTabs />
          <PcbCanvas />
          <LayerBar />
        </div>
      </div>
      <div className="h-[3px] shrink-0 bg-[#b0b0b0]" />
      <StatusBar />
      <MatchDialog />
    </div>
  );
}
